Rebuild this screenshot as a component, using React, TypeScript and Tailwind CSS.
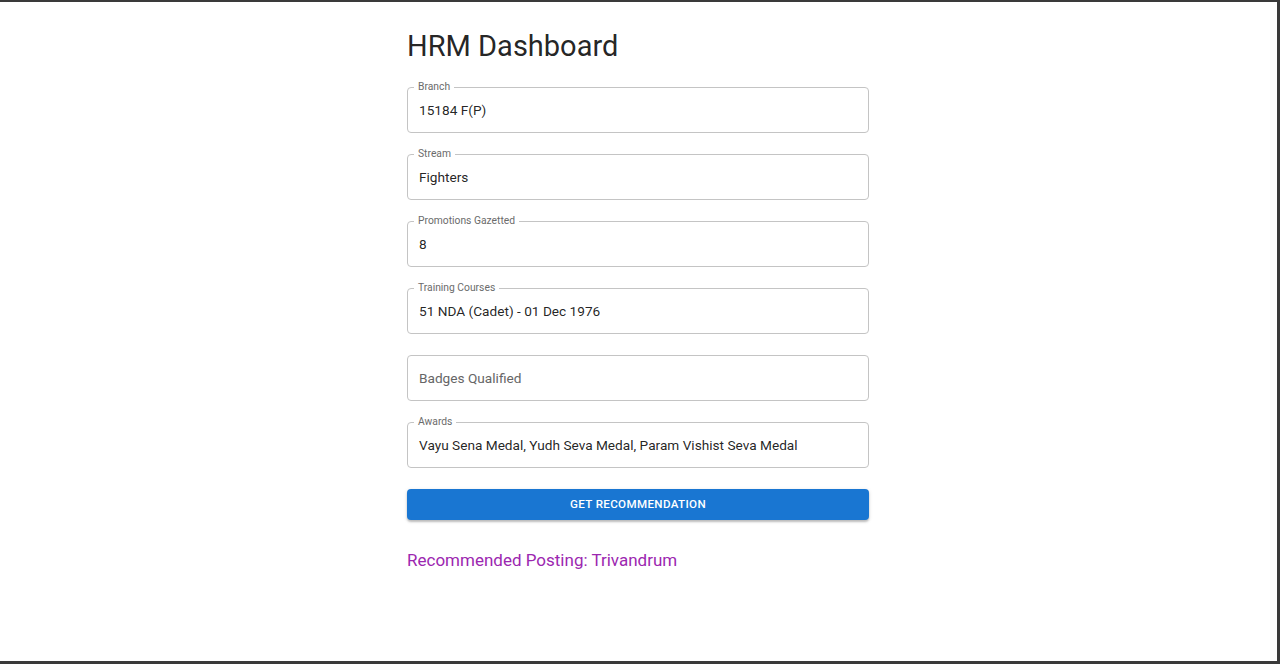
import React from "react";

type Field = {
  label: string;
  value?: string;
};

const fields: Field[] = [
  { label: "Branch", value: "15184 F(P)" },
  { label: "Stream", value: "Fighters" },
  { label: "Promotions Gazetted", value: "8" },
  { label: "Training Courses", value: "51 NDA (Cadet) - 01 Dec 1976" },
  { label: "Badges Qualified" },
  { label: "Awards", value: "Vayu Sena Medal, Yudh Seva Medal, Param Vishist Seva Medal" },
];

function OutlinedField({ label, value }: Field) {
  const filled = value !== undefined && value !== "";

  return (
    <div className="relative h-[46px] rounded-[4px] border border-[#c4c4c4] bg-white">
      {filled && (
        <span className="absolute left-[6px] top-[-7px] bg-white px-[4px] text-[10.3px] leading-[12px] text-[#6b6b6b]">
          {label}
        </span>
      )}
      <div className="flex h-full items-center px-[11px]">
        {filled ? (
          <span className="text-[13.65px] text-[rgba(0,0,0,0.87)]">{value}</span>
        ) : (
          <span className="text-[13.65px] text-[#666]">{label}</span>
        )}
      </div>
    </div>
  );
}

export default function App() {
  return (
    <div className="h-[664px] w-full border-t-2 border-r-[3px] border-b-[3px] border-[#3a3a3a] bg-white pr-px font-['Roboto','Liberation_Sans',sans-serif]">
      <div className="mx-auto w-[462px] pt-[27px]">
        <h1 className="text-[29px] leading-[34px] font-normal text-[rgba(0,0,0,0.87)]">
          HRM Dashboard
        </h1>
        <div className="mt-[24px] flex flex-col gap-[21px]">
          {fields.map((f) => (
            <OutlinedField key={f.label} label={f.label} value={f.value} />
          ))}
          <button className="h-[31px] w-full rounded-[4px] bg-[#1976d2] text-[11.6px] font-medium tracking-[0.03em] text-white uppercase shadow-[0_2px_2px_rgba(0,0,0,0.2),0_1px_4px_rgba(0,0,0,0.12)]">
            Get Recommendation
          </button>
        </div>
        <p className="mt-[28px] text-[17px] leading-[24px] text-[#9c27b0]">
          Recommended Posting: Trivandrum
        </p>
      </div>
    </div>
  );
}
